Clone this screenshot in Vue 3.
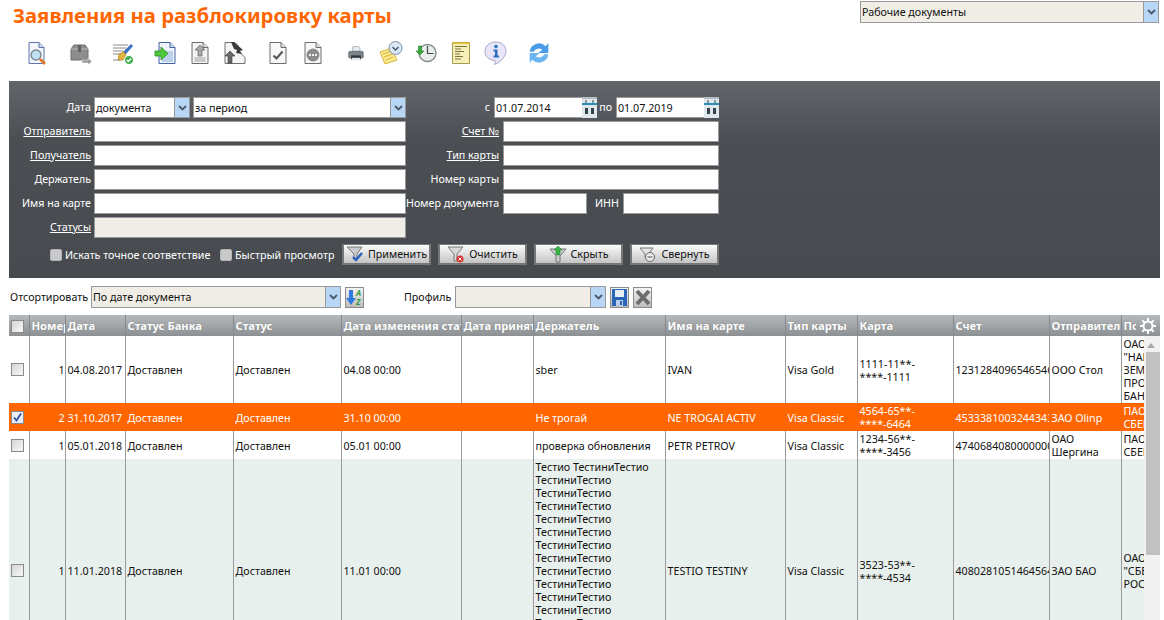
<template>
  <div class="page">
    <div class="top">
      <h1 class="title">Заявления на разблокировку карты</h1>
      <div class="sel sel-doc">
        <span class="sel-text">Рабочие документы</span>
        <span class="sel-arrow"><svg width="9" height="6" viewBox="0 0 9 6"><path d="M1 1l3.5 3.5L8 1" fill="none" stroke="#4a5a6a" stroke-width="1.8"/></svg></span>
      </div>
    </div>

    <!-- Панель инструментов -->
    <div class="toolbar">
      <span class="tool">
        <svg width="24" height="24" viewBox="0 0 24 24"><path d="M4 1.5h10l5 5v16H4z" fill="#f4f7fc" stroke="#5d77a8"/><path d="M14 1.5v5h5" fill="#cfdcf0" stroke="#5d77a8"/><circle cx="11" cy="14" r="5" fill="#bfe0f2" stroke="#7d8a94" stroke-width="1.4"/><path d="M15 18l5 5" stroke="#e8762a" stroke-width="2.6"/></svg>
      </span>
      <span class="tool sep">
        <svg width="24" height="24" viewBox="0 0 24 24"><path d="M3 8l3-4h11l3 4v11H3z" fill="#8d8d8d" stroke="#6e6e6e"/><path d="M3 8h17" stroke="#b5b5b5"/><path d="M10 4h3v7h-3z" fill="#5e5e5e"/><path d="M14 19h6v-2l4 3.5-4 3.5v-2h-6z" fill="#9a9a9a" stroke="#fff" stroke-width=".5"/></svg>
      </span>
      <span class="tool sep">
        <svg width="24" height="24" viewBox="0 0 24 24"><path d="M2 4h15M2 7h13M2 10h10M2 13h8M2 19h8" stroke="#8a8a8a"/><path d="M20 3l2 2-7 8-4 2 1-4z" fill="#3f6fc0"/><path d="M8 13l5-2 2 3-3 5H7z" fill="#e3b23a" stroke="#a07a20" stroke-width=".6"/><circle cx="18" cy="19" r="4.5" fill="#3eae4a" stroke="#fff"/><path d="M15.8 19l1.6 1.6 2.8-3" fill="none" stroke="#fff" stroke-width="1.4"/></svg>
      </span>
      <span class="tool sep7">
        <svg width="24" height="24" viewBox="0 0 24 24"><path d="M6 1.5h11l5 5v16H6z" fill="#eef3fb" stroke="#3f63a3"/><path d="M17 1.5v5h5" fill="#cfdcf0" stroke="#3f63a3"/><path d="M9 10h11v11H9z" fill="#bcd0ea"/><path d="M2 10h6V6l7 6.500-7 6.500v-4H2z" fill="#4fc73b" stroke="#2b8a22" stroke-width=".8"/></svg>
      </span>
      <span class="tool">
        <svg width="24" height="24" viewBox="0 0 24 24"><path d="M4 1.500h11l5 5v16H4z" fill="#f3f3f3" stroke="#6c6c6c"/><path d="M15 1.500v5h5" fill="#ddd" stroke="#6c6c6c"/><path d="M6.500 16h11v5h-11z" fill="#c9c9c9"/><path d="M12 4l5 5h-3v6h-4V9H7z" fill="#a9a9a9" stroke="#6c6c6c" stroke-width=".8"/></svg>
      </span>
      <span class="tool">
        <svg width="24" height="24" viewBox="0 0 24 24"><path d="M2 1.500h10l3 3v5l7 7v6H2z" fill="#f5f5f5" stroke="#707070"/><path d="M8 1l3 0 9 8-3 1 2 3-6-1 1-3-3-1z" fill="#3b3b3b"/><path d="M7 10l5 5h-3v7H5v-7H2z" fill="#6a6a6a" stroke="#3b3b3b" stroke-width=".6"/></svg>
      </span>
      <span class="tool sep">
        <svg width="24" height="24" viewBox="0 0 24 24"><path d="M4 1.500h11l5 5v16H4z" fill="#f8f8f8" stroke="#6c6c6c"/><path d="M15 1.500v5h5" fill="#e0e0e0" stroke="#6c6c6c"/><path d="M7.500 14.500l3 3 6-7" fill="none" stroke="#585858" stroke-width="2.200"/></svg>
      </span>
      <span class="tool">
        <svg width="24" height="24" viewBox="0 0 24 24"><path d="M4 1.500h11l5 5v16H4z" fill="#f8f8f8" stroke="#6c6c6c"/><path d="M15 1.500v5h5" fill="#e0e0e0" stroke="#6c6c6c"/><circle cx="12" cy="14" r="6.500" fill="#8b8b8b"/><path d="M8 14h8" stroke="#eee" stroke-width="2" stroke-dasharray="2 1"/></svg>
      </span>
      <span class="tool sep">
        <svg width="24" height="24" viewBox="-3 -3 30 30"><path d="M8 4h7l2 2v4H8z" fill="#e8eef0" stroke="#9aa2a6"/><path d="M4 10h16a1 1 0 0 1 1 1v7H3v-7a1 1 0 0 1 1-1z" fill="#7e868c" stroke="#5d6468"/><path d="M6 15h12v5H6z" fill="#2e3438"/><path d="M7 18h10v3H7z" fill="#dfe5e8"/></svg>
      </span>
      <span class="tool">
        <svg width="24" height="24" viewBox="0 0 24 24"><path d="M1 11l11-4 6 12-12 4z" fill="#fbe88e" stroke="#d7b53c"/><path d="M4 13l8-3M5 16l8-3M7 19l7-3" stroke="#d7b53c"/><circle cx="16.500" cy="7" r="6.500" fill="#dbe7f5" stroke="#7a8ea8"/><path d="M13.500 6l3 3 3-3" fill="none" stroke="#44546a" stroke-width="1.400"/></svg>
      </span>
      <span class="tool">
        <svg width="24" height="24" viewBox="0 0 24 24"><circle cx="13.500" cy="12" r="8.500" fill="#e8eeea" stroke="#868e8a" stroke-width="1.400"/><path d="M13.500 5v7.500h6" fill="none" stroke="#4a4a4a" stroke-width="1.200"/><path d="M2 10l4 4 4-4H7.500V5h-3v5z" fill="#3aa83a" stroke="#247a24" stroke-width=".6"/></svg>
      </span>
      <span class="tool">
        <svg width="24" height="24" viewBox="0 0 24 24"><path d="M3.500 1.500h17v21h-17z" fill="#f7efb8" stroke="#a89a4a"/><path d="M3.500 1.500h17v1.500h-17z" fill="#e7c63a"/><path d="M6 5.500h12M6 8h6M6 10.500h9M6 13h5M6 15.500h8M6 18h6" stroke="#7c7440"/></svg>
      </span>
      <span class="tool">
        <svg width="24" height="24" viewBox="0 0 24 24"><path d="M12 1C5.500 1 1 5 1 10.500 1 15.500 5 19 11 19.500c.5 1.500.5 3-.5 4 3.500-1 7-4 9-7 1.500-2 2.500-3.800 2.500-6C22 5 18 1 12 1z" fill="#e8e6f8" stroke="#a7a4cf"/><circle cx="12" cy="5.500" r="1.800" fill="#2a6fc0"/><path d="M9.500 8.500h4v6h1.500v2H9.500v-2H11v-4H9.500z" fill="#2a6fc0"/></svg>
      </span>
      <span class="tool sep">
        <svg width="24" height="24" viewBox="3 3 18 18"><path d="M5 11a7 7 0 0 1 12-4l2-2.500V12h-7.500l3-2.500A4.500 4.500 0 0 0 8 11z" fill="#4a9bea"/><path d="M19 13a7 7 0 0 1-12 4l-2 2.500V12h7.500l-3 2.500A4.500 4.500 0 0 0 16 13z" fill="#6db4f2"/></svg>
      </span>
    </div>

    <!-- Фильтр -->
    <form class="filter" @submit.prevent>
      <div class="frow">
        <label class="lbl l1">Дата</label>
        <div class="sel sel-kind"><span class="sel-text">документа</span><span class="sel-arrow"><svg width="9" height="6" viewBox="0 0 9 6"><path d="M1 1l3.500 3.500L8 1" fill="none" stroke="#4a5a6a" stroke-width="1.800"/></svg></span></div>
        <div class="sel sel-period"><span class="sel-text">за период</span><span class="sel-arrow"><svg width="9" height="6" viewBox="0 0 9 6"><path d="M1 1l3.500 3.500L8 1" fill="none" stroke="#4a5a6a" stroke-width="1.800"/></svg></span></div>
        <label class="lbl l-from">с</label>
        <div class="date">
          <span class="date-val">01.07.2014</span>
          <span class="cal"><svg width="15" height="21" viewBox="0 0 15 21"><path d="M0 2h15v19H0z" fill="#dfe6ec"/><path d="M0 6h15v2H0z" fill="#2e8fb5"/><path d="M4 3v3M11 3v3" stroke="#2c4a5c"/><path d="M3 11h3v6H3zM9 11h3v6H9z" fill="#33424c"/></svg></span>
        </div>
        <label class="lbl l-to">по</label>
        <div class="date">
          <span class="date-val">01.07.2019</span>
          <span class="cal"><svg width="15" height="21" viewBox="0 0 15 21"><path d="M0 2h15v19H0z" fill="#dfe6ec"/><path d="M0 6h15v2H0z" fill="#2e8fb5"/><path d="M4 3v3M11 3v3" stroke="#2c4a5c"/><path d="M3 11h3v6H3zM9 11h3v6H9z" fill="#33424c"/></svg></span>
        </div>
      </div>
      <div class="frow">
        <a class="lbl l1 link">Отправитель</a><input class="inp w-left" type="text" />
        <a class="lbl l2 link">Счет №</a><input class="inp w-right" type="text" />
      </div>
      <div class="frow">
        <a class="lbl l1 link">Получатель</a><input class="inp w-left" type="text" />
        <a class="lbl l2 link">Тип карты</a><input class="inp w-right" type="text" />
      </div>
      <div class="frow">
        <label class="lbl l1">Держатель</label><input class="inp w-left" type="text" />
        <label class="lbl l2">Номер карты</label><input class="inp w-right" type="text" />
      </div>
      <div class="frow">
        <label class="lbl l1">Имя на карте</label><input class="inp w-left" type="text" />
        <label class="lbl l2">Номер документа</label><input class="inp w-doc" type="text" />
        <label class="lbl l-inn">ИНН</label><input class="inp w-inn" type="text" />
      </div>
      <div class="frow">
        <a class="lbl l1 link">Статусы</a><div class="inp w-left inp-off"></div>
      </div>
      <div class="frow frow-btn">
        <span class="cb cb-dark"></span><span class="chk-text chk-1">Искать точное соответствие</span>
        <span class="cb cb-dark cb-2"></span><span class="chk-text chk-2">Быстрый просмотр</span>
        <button type="button" class="btn btn-first">
          <svg width="18" height="18" viewBox="0 0 18 18"><path d="M1 2h15l-5 7v3l-3 3v-6z" fill="#c9ccce" stroke="#777"/><path d="M7 12l3 3 6-7" fill="none" stroke="#2a5fc0" stroke-width="2.400"/></svg>
          Применить
        </button>
        <button type="button" class="btn">
          <svg width="18" height="18" viewBox="0 0 18 18"><path d="M1 2h15l-6 7v7H7V9z" fill="#d6d8da" stroke="#777"/><circle cx="13" cy="14" r="3.500" fill="#d8332e"/><path d="M11.500 12.500l3 3m0-3l-3 3" stroke="#fff"/></svg>
          Очистить
        </button>
        <button type="button" class="btn">
          <svg width="18" height="18" viewBox="0 0 18 18"><path d="M1 4h16l-6 7v6H7v-6z" fill="#c9ccce" stroke="#777"/><path d="M9 1l4 4h-2v5H7V5H5z" fill="#39b54a" stroke="#1f7a2c" stroke-width=".5"/></svg>
          Скрыть
        </button>
        <button type="button" class="btn">
          <svg width="18" height="18" viewBox="0 0 18 18"><path d="M1 3h13l-4 5v3" fill="#e4e5e6" stroke="#777"/><path d="M1 3l5 6v3" fill="none" stroke="#777"/><circle cx="11" cy="12" r="4.500" fill="#e9eaea" stroke="#666"/><path d="M8.500 12h5" stroke="#555"/></svg>
          Свернуть
        </button>
      </div>
    </form>

    <!-- Сортировка -->
    <div class="sortbar">
      <span class="sort-lbl">Отсортировать</span>
      <div class="sel sel-sort"><span class="sel-text">По дате документа</span><span class="sel-arrow"><svg width="9" height="6" viewBox="0 0 9 6"><path d="M1 1l3.500 3.500L8 1" fill="none" stroke="#4a5a6a" stroke-width="1.800"/></svg></span></div>
      <span class="ibtn">
        <svg width="17" height="17" viewBox="0 0 17 17"><path d="M3 1h4v8h3l-5 7-5-7h3z" fill="#2f7be0"/><text x="10" y="7" class="az">A</text><text x="10" y="16" class="az">Z</text></svg>
      </span>
      <span class="prof-lbl">Профиль</span>
      <div class="sel sel-prof"><span class="sel-text"></span><span class="sel-arrow"><svg width="9" height="6" viewBox="0 0 9 6"><path d="M1 1l3.500 3.500L8 1" fill="none" stroke="#4a5a6a" stroke-width="1.800"/></svg></span></div>
      <span class="ibtn">
        <svg width="15" height="17" viewBox="0 0 15 17"><path d="M0 0h15v17H0z" fill="#2a66b8"/><path d="M3 1h9v7H3z" fill="#e8eef6"/><path d="M4 11h7v6H4z" fill="#bcd0ea"/><path d="M8 12h2v4H8z" fill="#2a66b8"/></svg>
      </span>
      <span class="ibtn">
        <svg width="16" height="17" viewBox="0 0 16 17"><path d="M2 2l12 13M14 2L2 15" stroke="#6d6d6d" stroke-width="4"/></svg>
      </span>
    </div>

    <!-- Таблица -->
    <div class="grid-wrap">
      <table class="grid">
        <colgroup>
          <col v-for="(w, i) in colWidths" :key="i" :style="{ width: w + 'px' }" />
        </colgroup>
        <thead>
          <tr>
            <th class="c-cb"><span class="cb"></span></th>
            <th v-for="h in headers" :key="h">{{ h }}</th>
          </tr>
        </thead>
        <tbody>
          <tr v-for="(r, i) in rows" :key="i" :class="r.cls">
            <td class="c-cb"><span class="cb" :class="{ 'cb-on': r.checked }"><svg v-if="r.checked" width="11" height="11" viewBox="0 0 11 11"><path d="M2 5.500l2.500 3 4.500-7" fill="none" stroke="#2f4fa0" stroke-width="1.800"/></svg></span></td>
            <td class="c-num">{{ r.num }}</td>
            <td>{{ r.date }}</td>
            <td>{{ r.bank }}</td>
            <td>{{ r.status }}</td>
            <td>{{ r.changed }}</td>
            <td></td>
            <td>
              <template v-if="r.holderLines">
                <div class="holder-top">Тестио ТестиниТестио</div>
                <div v-for="n in r.holderLines" :key="n">ТестиниТестио</div>
              </template>
              <template v-else>{{ r.holder }}</template>
            </td>
            <td>{{ r.name }}</td>
            <td>{{ r.type }}</td>
            <td>{{ r.card }}</td>
            <td>{{ r.account }}</td>
            <td>{{ r.sender }}</td>
            <td>{{ r.receiver }}</td>
          </tr>
        </tbody>
      </table>
      <!-- шестеренка и скролл лежат поверх таблицы -->
      <div class="gear-box">
        <svg width="18" height="18" viewBox="0 0 18 18"><circle cx="9" cy="9" r="4.500" fill="none" stroke="#fff" stroke-width="2"/><path d="M9 1v3M9 14v3M1 9h3M14 9h3M3.300 3.300l2.100 2.100M12.600 12.600l2.100 2.100M3.300 14.700l2.100-2.100M12.600 5.400l2.100-2.100" stroke="#fff" stroke-width="2"/></svg>
      </div>
      <div class="vscroll">
        <span class="vs-up"></span>
        <span class="vs-thumb"></span>
      </div>
    </div>
  </div>
</template>

<script setup>
const colWidths = [20, 36, 60, 108, 108, 120, 72, 132, 120, 72, 96, 96, 72, 39]

const headers = [
  'Номер', 'Дата', 'Статус Банка', 'Статус', 'Дата изменения статуса', 'Дата принятия',
  'Держатель', 'Имя на карте', 'Тип карты', 'Карта', 'Счет', 'Отправитель', 'Получатель'
]

const rows = [
  {
    num: 1, date: '04.08.2017', bank: 'Доставлен', status: 'Доставлен', changed: '04.08 00:00',
    holder: 'sber', name: 'IVAN', type: 'Visa Gold', card: '1111-11**-****-1111',
    account: '12312840965465465', sender: 'ООО Стол', receiver: 'ОАО "НАЦИОНАЛЬНЫЙ ЗЕМЕЛЬНЫЙ ПРОМЫШЛЕННЫЙ БАНК"'
  },
  {
    cls: 'row-sel', checked: true,
    num: 2, date: '31.10.2017', bank: 'Доставлен', status: 'Доставлен', changed: '31.10 00:00',
    holder: 'Не трогай', name: 'NE TROGAI ACTIV', type: 'Visa Classic', card: '4564-65**-****-6464',
    account: '45333810032443434', sender: 'ЗАО Olinp', receiver: 'ПАО СБЕРБАНК'
  },
  {
    num: 1, date: '05.01.2018', bank: 'Доставлен', status: 'Доставлен', changed: '05.01 00:00',
    holder: 'проверка обновления', name: 'PETR PETROV', type: 'Visa Classic', card: '1234-56**-****-3456',
    account: '47406840800000000', sender: 'ОАО Шергина', receiver: 'ПАО СБЕРБАНК'
  },
  {
    cls: 'row-alt',
    num: 1, date: '11.01.2018', bank: 'Доставлен', status: 'Доставлен', changed: '11.01 00:00',
    holderLines: 16, name: 'TESTIO TESTINY', type: 'Visa Classic', card: '3523-53**-****-4534',
    account: '40802810514645645', sender: 'ЗАО БАО', receiver: 'ОАО "СБЕРБАНК РОССИИ"'
  }
]
</script>

<style>
html, body {
  margin: 0;
  height: 100%;
  overflow: hidden;
  background: #fff;
}
</style>

<style scoped>
.page {
  height: 620px;
  overflow: hidden;
  font-family: "Noto Sans", "Liberation Sans", sans-serif;
  font-size: 10.7px;
  color: #111;
  padding: 0 4px 0 9px;
  box-sizing: border-box;
}

.top {
  display: flex;
  justify-content: space-between;
  height: 35px;
}

.title {
  margin: 3px 0 0 4px;
  font-family: "Noto Sans", sans-serif;
  font-size: 20.3px;
  line-height: 24px;
  font-weight: 700;
  color: #ff6600;
}

.sel {
  display: flex;
  flex: none;
  box-sizing: border-box;
  height: 22px;
  border: 1px solid #999;
  background: #f0ede6;
  line-height: 20px;
}

.sel-text {
  flex: 1;
  padding-left: 1px;
  overflow: hidden;
}

.sel-arrow {
  display: flex;
  align-items: center;
  justify-content: center;
  width: 14px;
  background: #b8d6f6;
  border-left: 1px solid #999;
}

.sel-doc {
  width: 299px;
  margin: 1px 1px 0 0;
}

.toolbar {
  display: flex;
  height: 46px;
  padding-left: 10px;
  padding-top: 6px;
  box-sizing: border-box;
}

.tool {
  display: flex;
  justify-content: center;
  width: 35px;
  height: 24px;
}

.sep {
  margin-left: 8px;
}

.sep7 {
  margin-left: 7px;
}

.filter {
  height: 197px;
  box-sizing: border-box;
  padding-top: 16px;
  background: linear-gradient(#62666a, #4b4f53 30%, #474b4f);
  color: #fff;
}

.frow {
  display: flex;
  align-items: center;
  height: 21px;
  margin-bottom: 3px;
}

.frow-btn {
  margin-top: 6px;
}

.lbl {
  flex: none;
  padding-bottom: 2px;
  text-align: right;
  white-space: nowrap;
}

.link {
  text-decoration: underline;
}

.l1 {
  width: 82px;
  margin-right: 3px;
}

.l2 {
  width: 93px;
  margin-right: 4px;
}

.l-from {
  width: 84px;
  margin-right: 4px;
}

.l-to {
  width: 15px;
  margin-right: 4px;
}

.l-inn {
  width: 32px;
  margin-right: 4px;
}

.inp {
  flex: none;
  box-sizing: border-box;
  height: 21px;
  border: 1px solid #999;
  background: #fff;
  padding: 0 1px;
  font: inherit;
  outline: none;
}

.inp-off {
  background: #f0ede6;
}

.w-left {
  width: 312px;
}

.w-right {
  width: 216px;
}

.w-doc {
  width: 84px;
}

.w-inn {
  width: 96px;
}

.filter .sel {
  background: #fff;
  color: #111;
  height: 21px;
  line-height: 21px;
}

.sel-kind {
  width: 96px;
  margin-right: 3px;
}

.sel-period {
  width: 213px;
}

.date {
  display: flex;
  flex: none;
  box-sizing: border-box;
  width: 103px;
  height: 21px;
  background: #fff;
  border: 1px solid #999;
  color: #111;
  line-height: 21px;
}

.date-val {
  flex: 1;
  padding-left: 1px;
}

.cal {
  display: flex;
  width: 15px;
  background: #b3bcc5;
  margin: -1px -1px -1px 0;
  justify-content: center;
}

.cb {
  display: inline-block;
  box-sizing: border-box;
  width: 13px;
  height: 13px;
  border: 1px solid #8a8a8a;
  background: linear-gradient(135deg, #d5d5d5, #f8f8f8);
  vertical-align: middle;
}

.cb-dark {
  width: 12px;
  height: 12px;
  flex: none;
  margin-left: 41px;
  background: #c9c9c9;
  border-color: #b5b5b5;
  border-radius: 2px;
}

.cb-2 {
  margin-left: 9px;
}

.cb-on {
  background: #e8ebf5;
}

.chk-text {
  flex: none;
  margin-left: 3px;
  white-space: nowrap;
}

.chk-1 {
  width: 146px;
}

.chk-2 {
  width: 97px;
}

.btn {
  display: flex;
  flex: none;
  align-items: center;
  justify-content: center;
  gap: 4px;
  box-sizing: border-box;
  width: 89px;
  height: 21px;
  margin-left: 7px;
  padding: 0 0 1px;
  border: 2px solid #777;
  border-width: 1px 2px 2px 2px;
  background: linear-gradient(#fbfbfb, #c4c4c4);
  font: inherit;
  color: #111;
}

.btn-first {
  margin-left: 10px;
}

.sortbar {
  display: flex;
  align-items: center;
  height: 22px;
  margin-top: 8px;
  margin-bottom: 7px;
}

.sort-lbl {
  flex: none;
  width: 81px;
  margin-left: 1px;
  white-space: nowrap;
}

.sel-sort {
  width: 250px;
}

.ibtn {
  display: flex;
  flex: none;
  align-items: center;
  justify-content: center;
  box-sizing: border-box;
  width: 19px;
  height: 21px;
  margin-left: 4px;
  background: linear-gradient(#f4f4f4, #bdbdbd);
  border: 1px solid #8c8c8c;
}

.az {
  font-size: 8px;
  font-weight: 700;
  font-style: italic;
  fill: #2e9a3c;
}

.prof-lbl {
  flex: none;
  margin-left: 40px;
  width: 51px;
}

.sel-prof {
  width: 151px;
}

.grid-wrap {
  position: relative;
  width: 1151px;
  height: 305px;
  overflow: hidden;
}

.grid {
  table-layout: fixed;
  width: 1151px;
  border-collapse: collapse;
  line-height: 13px;
}

.grid th {
  height: 21px;
  padding: 0 1px 0 2px;
  background: linear-gradient(#b5b9bc, #8c9093);
  border-left: 1px solid #85898c;
  color: #fff;
  font-size: 11.2px;
  font-weight: 700;
  text-align: left;
  white-space: nowrap;
  overflow: hidden;
  text-shadow: 0 0 1px #777;
}

.grid td {
  padding: 2px 1px 0 2px;
  border-left: 1px solid #999;
  overflow: hidden;
  vertical-align: middle;
}

.grid th.c-cb,
.grid td.c-cb {
  border-left: none;
  padding: 0 0 0 2px;
}

.grid td.c-num {
  padding-right: 0;
  text-align: right;
}

.row-sel td {
  background: #ff6600;
  color: #fff;
}

.grid .row-sel td {
  border-left-color: #ff6600;
}

.row-alt td {
  background: #e8f0ed;
}

.holder-top {
  white-space: nowrap;
}

.gear-box {
  position: absolute;
  top: 0;
  right: 0;
  display: flex;
  align-items: center;
  justify-content: center;
  width: 24px;
  height: 21px;
  background: linear-gradient(#b5b9bc, #8c9093);
}

.vscroll {
  position: absolute;
  top: 21px;
  right: 0;
  bottom: 0;
  width: 16px;
  background: #f1f1f1;
}

.vs-up {
  position: absolute;
  top: 7px;
  left: 3px;
  border: 4px solid transparent;
  border-top: none;
  border-bottom: 5px solid #a8a8a8;
}

.vs-thumb {
  position: absolute;
  top: 16px;
  left: 2px;
  right: 0;
  height: 203px;
  background: #c1c1c1;
}
</style>
